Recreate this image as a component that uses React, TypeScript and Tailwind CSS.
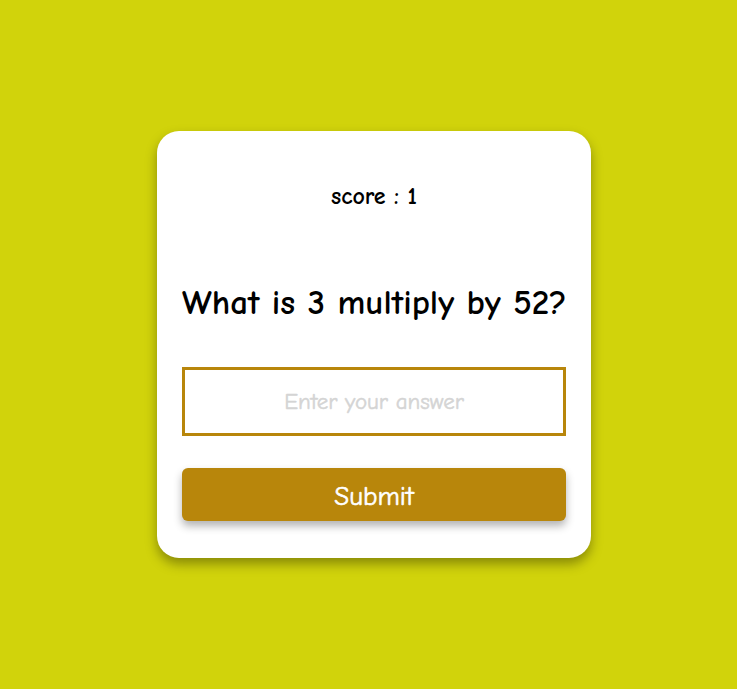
import React from "react";

export default function App() {
  return (
    <div
      className="w-full min-h-screen h-[689px] bg-[#d1d30b] flex items-center justify-center pl-[11px]"
      style={{ fontFamily: '"Comic Sans MS", "Comic Neue", "Open Sans", "Noto Sans", sans-serif' }}
    >
      <div className="w-[434px] bg-white rounded-[22px] shadow-[0_6px_12px_rgba(0,0,0,0.35)] px-[25px] pt-[51px] pb-[37px] flex flex-col">
        <div className="text-[24px] leading-[28px] font-bold text-black text-center">score : 1</div>
        <h1 className="mt-[73px] text-[35px] leading-[40px] font-bold text-black text-center whitespace-nowrap">
          What is 3 multiply by 52?
        </h1>
        <input
          className="mt-[44px] h-[69px] w-full border-[3px] border-[#b8860b] text-center text-[23px] [-webkit-text-stroke-width:0.5px] outline-none placeholder:text-[#d4d4d4]"
          placeholder="Enter your answer"
          style={{ fontFamily: "inherit" }}
        />
        <button className="mt-[32px] h-[53px] pt-[5px] w-full rounded-[6px] bg-[#b8860b] text-white text-[27px] [-webkit-text-stroke-width:0.6px] shadow-[0_5px_8px_rgba(0,0,0,0.3)]">
          Submit
        </button>
      </div>
    </div>
  );
}
